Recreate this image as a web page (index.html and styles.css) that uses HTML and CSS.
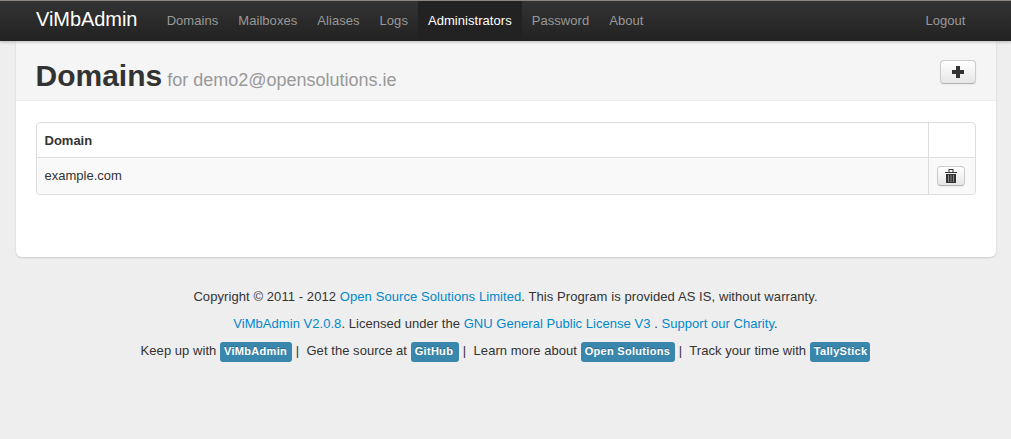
FILE: index.html
```html
<!DOCTYPE html>
<html lang="en">
<head>
<meta charset="utf-8">
<title>ViMbAdmin</title>
<link rel="stylesheet" href="styles.css">
</head>
<body>
<header class="navbar">
  <div class="container nav-inner">
    <a class="brand" href="#">ViMbAdmin</a>
    <nav class="nav">
      <a href="#">Domains</a>
      <a href="#">Mailboxes</a>
      <a href="#">Aliases</a>
      <a href="#">Logs</a>
      <a class="active" href="#">Administrators</a>
      <a href="#">Password</a>
      <a href="#">About</a>
    </nav>
    <nav class="nav nav-right"><a href="#">Logout</a></nav>
  </div>
</header>
<main class="container card">
  <div class="page-header">
    <h1>Domains<small> for demo2@opensolutions.ie</small></h1>
    <a class="btn btn-add" href="#" aria-label="Add">
      <svg width="14" height="14" viewBox="0 0 14 14"><path d="M5 1h4v4h4v4H9v4H5V9H1V5h4z" fill="#333"/></svg>
    </a>
  </div>
  <div class="card-body">
    <table class="table">
      <thead><tr><th>Domain</th><th class="col-action"></th></tr></thead>
      <tbody><tr><td>example.com</td><td class="col-action">
        <a class="btn btn-mini" href="#" aria-label="Delete">
          <svg width="12" height="14" viewBox="0 0 12 14"><path d="M0 3h12v1H0zM3.500 0h5v3h-1V1h-3v2h-1z" fill="#333"/><path d="M1 5h10v9H1z" fill="#333"/><path d="M3 6h1v7H3zM5.500 6h1v7h-1zM8 6h1v7H8z" fill="#888"/></svg>
        </a></td></tr></tbody>
    </table>
  </div>
</main>
<footer class="footer">
  <p class="line-wide">Copyright © 2011 - 2012 <a href="#">Open Source Solutions Limited</a>. This Program is provided AS IS, without warranty.</p>
  <p class="line-mid"><a href="#">ViMbAdmin V2.0.8</a>. Licensed under the <a href="#">GNU General Public License V3</a> . <a href="#">Support our Charity</a>.</p>
  <p class="line-badges">Keep up with <a class="label" href="#">ViMbAdmin</a> |&nbsp; Get the source at <a class="label label-roomy" href="#">GitHub</a> |&nbsp; Learn more about <a class="label" href="#">Open Solutions</a> |&nbsp; Track your time with <a class="label label-tight" href="#">TallyStick</a></p>
</footer>
</body>
</html>
```
FILE: styles.css
```css
* { box-sizing: border-box; }
html, body { margin: 0; padding: 0; }
body {
  background: #eee;
  color: #333;
  font-family: "Liberation Sans", Arial, sans-serif;
  font-size: 13px;
  line-height: 18px;
  min-height: 439px;
}
a { color: #08c; text-decoration: none; }
.container { width: 980px; margin: 0 auto; }
.navbar {
  height: 41px;
  background: linear-gradient(to bottom, #333, #222);
  border-top: 1px solid #8a8580;
  box-shadow: 0 1px 3px rgba(0,0,0,.25);
  position: relative;
  z-index: 2;
}
.nav-inner { display: flex; align-items: stretch; height: 40px; }
.brand {
  color: #fff;
  font-size: 20px;
  font-weight: 200;
  line-height: 24px;
  letter-spacing: -.05px;
  padding: 6px 19.2px 10px 20.5px;
}
.nav { display: flex; letter-spacing: .05px; }
.nav a { color: #999; padding: 10px 10px 11px; line-height: 19px; }
.nav a.active { color: #fff; background: #222; }
.nav-right { margin-left: auto; padding-right: 20px; }
.card {
  background: #fff;
  border-radius: 0 0 6px 6px;
  box-shadow: 0 1px 2px rgba(0,0,0,.15);
  height: 216px;
}
.page-header {
  height: 60px;
  background: #f5f5f5;
  border-bottom: 1px solid #eee;
  padding: 0 20px;
  display: flex;
  justify-content: space-between;
}
h1 {
  margin: 0;
  font-size: 30px;
  line-height: 36px;
  padding-top: 17px;
  font-weight: bold;
}
h1 small { font-size: 18px; font-weight: normal; color: #999; }
.btn {
  display: inline-flex;
  align-items: center;
  justify-content: center;
  border: 1px solid #ccc;
  border-bottom-color: #b3b3b3;
  border-radius: 4px;
  background: linear-gradient(to bottom, #fff, #e6e6e6);
  box-shadow: inset 0 1px 0 rgba(255,255,255,.2), 0 1px 2px rgba(0,0,0,.05);
}
.btn-add { width: 36px; height: 24px; margin-top: 19px; }
.btn-mini { width: 28px; height: 20px; }
.card-body { padding: 21px 20px 0; }
.table {
  width: 100%;
  border-collapse: separate;
  border-spacing: 0;
  border: 1px solid #ddd;
  border-radius: 4px;
}
.table th, .table td { padding: 9px 8px 7px; text-align: left; line-height: 18px; border-left: 1px solid #ddd; }
.table th:first-child, .table td:first-child { border-left: 0; }
.table td { border-top: 1px solid #ddd; background: #f9f9f9; vertical-align: top; padding-bottom: 9px; }
.table tbody tr td:first-child { border-bottom-left-radius: 4px; }
.table tbody tr td:last-child { border-bottom-right-radius: 4px; }
.col-action { width: 47px; }
.table td.col-action { padding: 8px 8px 7px; line-height: 0; }
.footer { text-align: center; padding-top: 31px; }
.footer p { margin: 0 0 9px; height: 18px; }
.line-wide { letter-spacing: .08px; }
.line-mid { letter-spacing: .04px; }
.line-badges { letter-spacing: .05px; }
.label {
  display: inline-block;
  background: #3a87ad;
  color: #fff;
  font-size: 11px;
  font-weight: bold;
  line-height: 14px;
  letter-spacing: .3px;
  padding: 2px 5px 4px 4px;
  border-radius: 3px;
  text-shadow: 0 -1px 0 rgba(0,0,0,.25);
}
.label-roomy { padding-right: 6px; }
.label-tight { padding-right: 3px; }
```
